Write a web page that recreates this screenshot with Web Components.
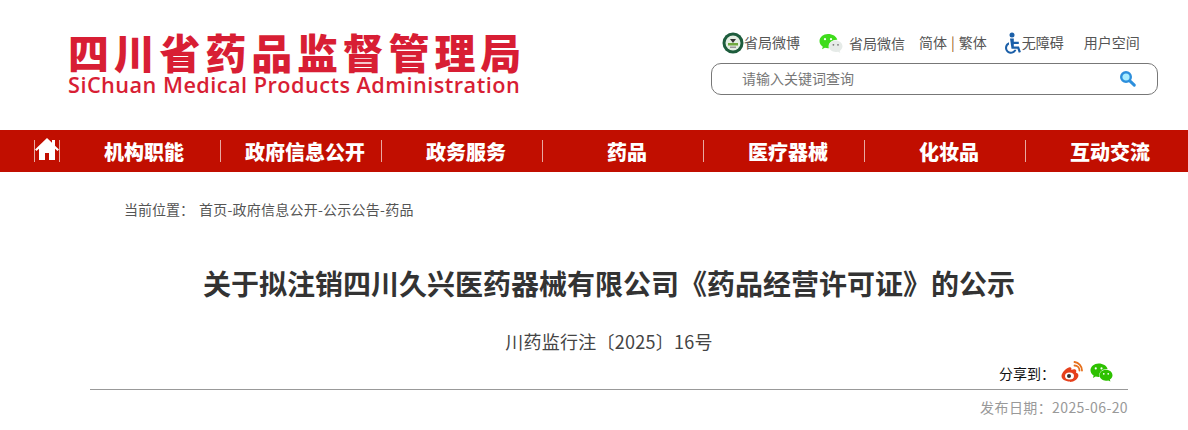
<!DOCTYPE html>
<html lang="zh"><head><meta charset="utf-8"><style>
html,body{margin:0;padding:0;background:#fff;overflow:hidden}
body{width:1188px;height:430px;font-family:"Noto Sans CJK SC","Liberation Sans",sans-serif;color:#333}
</style></head><body>
<site-header></site-header>
<site-nav></site-nav>
<bread-crumb></bread-crumb>
<article-head></article-head>
<template id="wechat"><svg width="24" height="22" viewBox="0 0 24 22"><path fill="#2dc100" d="M9 1C4.300 1 .5 4.200 .5 8.100c0 2.300 1.300 4.300 3.300 5.600l-.8 2.500 2.900-1.500c1 .3 2 .5 3.100.5.300 0 .6 0 .9 0-.2-.6-.3-1.200-.3-1.800 0-3.700 3.500-6.700 7.900-6.700h.8C17.500 3.400 13.600 1 9 1z"/><circle cx="6" cy="6.200" r="1.100" fill="#fff"/><circle cx="12" cy="6.200" r="1.100" fill="#fff"/><path fill="#2dc100" d="M23.500 13.300c0-3.100-3.100-5.700-6.800-5.700s-6.800 2.600-6.800 5.700 3.100 5.700 6.800 5.700c.8 0 1.600-.1 2.300-.3l2.300 1.200-.6-2c1.700-1.100 2.800-2.700 2.800-4.600z"/><circle cx="14.400" cy="11.800" r=".9" fill="#fff"/><circle cx="19" cy="11.800" r=".9" fill="#fff"/></svg></template>
<script>
const def=(n,h)=>customElements.define(n,class extends HTMLElement{connectedCallback(){if(!this.shadowRoot){this.attachShadow({mode:'open'}).innerHTML=typeof h==='function'?h(this):h}}});
const wx=()=>document.getElementById('wechat').innerHTML;
def('site-header',()=>`<style>
:host{display:flex;justify-content:space-between;height:130px;box-sizing:border-box}
.logo{padding:30px 0 0 68px;color:#d81e34;white-space:nowrap}
.cn{font-size:41px;font-weight:900;line-height:42px;letter-spacing:4.8px;height:45px}
.en{font-family:"Open Sans","Noto Sans",sans-serif;font-size:21.7px;font-weight:600;line-height:20px;letter-spacing:.46px}
.side{width:447px;margin-right:30px;padding-top:30px;font-size:14px;color:#555}
.top{display:flex;align-items:center;height:26px;white-space:nowrap;line-height:26px}
.top span{display:block;position:relative;top:-1px}
.box{margin-top:7px;height:30px;border:1px solid #777;border-radius:10px;display:flex;align-items:center;padding:0 20px 0 30px;justify-content:space-between;font-size:14px;line-height:28px;color:#777}
.box span{position:relative;top:-1px}
svg{display:block;flex:none}
</style>
<div class="logo"><div class="cn">四川省药品监督管理局</div><div class="en">SiChuan Medical Products Administration</div></div>
<div class="side"><div class="top">
<svg style="margin-left:11px" width="22" height="22" viewBox="0 0 22 22"><circle cx="11" cy="11" r="10.500" fill="#1d5c3c"/><circle cx="11" cy="11" r="7.500" fill="#e4eee2"/><path d="M8 7h6l-3 4z" fill="#333"/><rect x="6" y="11" width="10" height="2.500" fill="#6fa83e"/><rect x="8" y="14.500" width="6" height="1.500" fill="#999"/></svg>
<span>省局微博</span>
<span style="margin-left:19px;display:flex;top:1px">${wx().replace('#2dc100','#3fdc1c').replace('#2dc100','#e6ebe8').replace('cx="14.400" cy="11.800" r=".9" fill="#fff"','cx="14.400" cy="11.800" r=".9" fill="#777"').replace('cx="19" cy="11.800" r=".9" fill="#fff"','cx="19" cy="11.800" r=".9" fill="#777"')}</span>
<span style="margin-left:6px;top:0">省局微信</span>
<span style="margin-left:14px;">简体</span><span style="margin:0 4px;color:#9a5a20">|</span><span>繁体</span>
<svg style="margin-left:17px" width="18" height="22" viewBox="0 0 18 22"><g fill="#1b5fa8"><circle cx="8" cy="3" r="2.500"/><path d="M6 6.500h3.800v3.300h5v2.200H9.800v2.500h5.200l1.900 5.500-2.100.7-1.400-4H7.500z"/><path d="M5 10.200v2.300a3.900 3.900 0 1 0 5.400 5.200h2.100A5.900 5.900 0 1 1 5 10.200z"/></g></svg>
<span>无障碍</span><span style="margin-left:20px">用户空间</span>
</div>
<div class="box"><span>请输入关键词查询</span>
<svg width="18" height="18" viewBox="0 0 18 18"><circle cx="7" cy="7" r="4.800" fill="#a9ecff" stroke="#2d8fdc" stroke-width="2.400"/><path d="M10.800 10.800l4.500 4.300" stroke="#2d8fdc" stroke-width="3" stroke-linecap="round"/></svg>
</div></div>`);
def('nav-item',(e)=>`<style>
:host{display:flex;align-items:center;justify-content:center;box-sizing:border-box;width:161px;height:42px;padding-left:7px;font-size:20px;font-weight:900;color:#fff;position:relative;white-space:nowrap}
.s{position:absolute;right:0;top:10px;width:1px;height:22px;background:#e8a9a0}
</style><slot></slot>${e.hasAttribute('last')?'':'<i class="s"></i>'}`);
def('site-nav',()=>`<style>
:host{display:flex;height:42px;background:#c10e00;padding-left:34px}
.h{width:24px;height:22px;margin-top:10px;border-left:1px solid #e8a9a0;border-right:1px solid #e8a9a0;display:flex;justify-content:center}
svg{display:block;margin-top:-3px;flex:none}
</style><div class="h"><svg width="26" height="24" viewBox="0 0 26 24"><path fill="#fff" d="M13 1L1 12.500l1.500 1.500L5 11.800V23h6v-7h4v7h6V11.800l2.500 2.200L25 12.500l-4-3.800V3h-3v2.800z"/></svg></div>
<nav-item>机构职能</nav-item><nav-item>政府信息公开</nav-item><nav-item>政务服务</nav-item><nav-item>药品</nav-item><nav-item>医疗器械</nav-item><nav-item>化妆品</nav-item><nav-item last>互动交流</nav-item>`);
def('bread-crumb',()=>`<style>
:host{display:block;padding:27px 0 0 124px;font-size:14px;line-height:20px;color:#555;height:51px;white-space:nowrap}
span{margin-left:5px;letter-spacing:.24px}
</style>当前位置：<span>首页-政府信息公开-公示公告-药品</span>`);
def('article-head',()=>`<style>
:host{display:block;margin:0 60px 0 90px;text-align:center}
h1{margin:0;font-size:28px;font-weight:700;line-height:40px;color:#333;padding-top:13px}
.no{font-size:18px;line-height:26px;margin-top:25px;color:#444;letter-spacing:.27px}
.share{display:flex;justify-content:flex-end;align-items:center;height:24px;font-size:14px;color:#111;padding-right:15px;margin-top:7px}
.share svg{display:block}
.rule{border-top:1px solid #999;margin-top:4px}
.date{text-align:right;font-size:14px;line-height:20px;margin-top:7px;color:#999;letter-spacing:.4px}
.w{margin-left:6px;margin-right:7px;position:relative;top:-2px}
</style><h1>关于拟注销四川久兴医药器械有限公司《药品经营许可证》的公示</h1>
<div class="no">川药监行注〔2025〕16号</div>
<div class="share"><span>分享到：</span>
<svg class="w" width="22" height="21" viewBox="0 0 22 21"><path fill="#e6401c" d="M9 20.500C4.200 20.500.5 18.200.5 15c0-3.300 4.600-8 8-8.800 1.700-.3 2.300 1 1.800 2.700 2.600-1 5-.8 5 1.200 0 .6-.2 1-.4 1.500 1.400.5 2.500 1.300 2.500 2.900 0 3.200-4.200 6.500-8.400 6.500z"/><ellipse cx="8.500" cy="15" rx="4.500" ry="3.600" fill="#fff"/><circle cx="8" cy="15" r="2" fill="#333"/><path d="M13.500 4.500a5 5 0 0 1 5 5M13.500 1a8.500 8.500 0 0 1 7.500 8.500" fill="none" stroke="#e6701c" stroke-width="1.800" stroke-linecap="round"/></svg>
${wx().replace('width="24"','width="23"')}</div>
<div class="rule"></div><div class="date">发布日期：2025-06-20</div>`);
</script></body></html>
